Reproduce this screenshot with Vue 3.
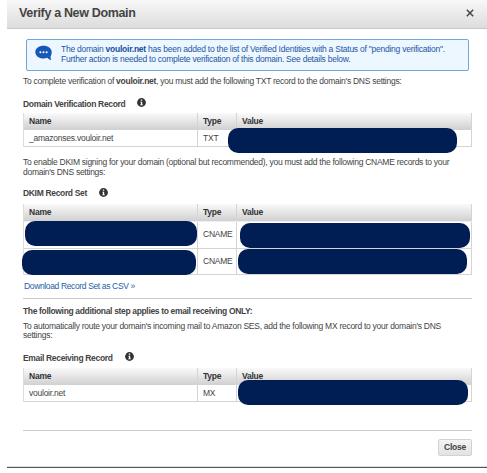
<script setup>
const domain = 'vouloir.net'
const sets = {
  txt: [{ name: '_amazonses.vouloir.net', type: 'TXT', value: 'm1' }],
  dkim: [
    { mask: 'm2', type: 'CNAME', value: 'm3' },
    { mask: 'm4', type: 'CNAME', value: 'm5' }
  ],
  mx: [{ name: 'vouloir.net', type: 'MX', value: 'm6' }]
}
const blocks = [
  { key: 'txt', label: 'Domain Verification Record' },
  { key: 'dkim', label: 'DKIM Record Set' },
  { key: 'mx', label: 'Email Receiving Record' }
]
</script>

<template>
  <div class="dialog">
    <header class="head">
      <h1>Verify a New Domain</h1>
      <svg class="x" viewBox="0 0 8 8"><path d="M.8.8 7.200 7.200M7.200.8.8 7.200" stroke="#444" stroke-width="1.500" /></svg>
    </header>
    <main class="body">
      <div class="alert">
        <svg class="bubble" viewBox="0 0 17 16">
          <path d="M8.5.7C4 .7.3 3.200.3 7s3.700 6.500 8.200 6.500c1.400 0 2.700-.2 3.800-.7 1 1.200 2.400 2 4 2.200-.5-.9-.8-2.200-.7-3.500.7-1.200 1.100-2.800 1.100-4.500C16.700 3.200 13 .7 8.500.7z" fill="#1659b5" />
          <circle cx="5.400" cy="7.300" r="1" fill="#fff" /><circle cx="8.500" cy="7.300" r="1" fill="#fff" /><circle cx="11.600" cy="7.300" r="1" fill="#fff" />
        </svg>
        <div class="alert-text">
          <div class="a1">The domain <b>{{ domain }}</b> has been added to the list of Verified Identities with a Status of "pending verification".</div>
          <div class="a2">Further action is needed to complete verification of this domain. See details below.</div>
        </div>
      </div>
      <section v-for="b in blocks" :key="b.key" :class="b.key">
        <p v-if="b.key === 'txt'">To complete verification of <b>{{ domain }}</b>, you must add the following TXT record to the domain's DNS settings:</p>
        <p v-else-if="b.key === 'dkim'">To enable DKIM signing for your domain (optional but recommended), you must add the following CNAME records to your<br>domain's DNS settings:</p>
        <template v-else>
          <div class="only">The following additional step applies to email receiving ONLY:</div>
          <p>To automatically route your domain's incoming mail to Amazon SES, add the following MX record to your domain's DNS<br>settings:</p>
        </template>
        <h2>
          <span>{{ b.label }}</span>
          <svg viewBox="0 0 9 9"><circle cx="4.500" cy="4.500" r="4.400" fill="#333" /><path d="M3.300 3.700h1.900v2.800h.7v.8H3.200v-.8h.7v-2h-.6zM3.800 1.400h1.400v1.400H3.800z" fill="#fff" /></svg>
        </h2>
        <div class="table">
          <div class="row th"><div>Name</div><div>Type</div><div>Value</div></div>
          <div v-for="r in sets[b.key]" :key="r.value" class="row td">
            <div><i v-if="r.mask" class="mask" :class="r.mask"></i><span v-else>{{ r.name }}</span></div>
            <div>{{ r.type }}</div>
            <div><i class="mask" :class="r.value"></i></div>
          </div>
        </div>
        <a v-if="b.key === 'dkim'">Download Record Set as CSV »</a>
      </section>
      <footer><button>Close</button></footer>
    </main>
  </div>
</template>

<style>
body { margin: 0; background: #fff; overflow: hidden; }
</style>
<style scoped>
* { box-sizing: border-box; }
.dialog { margin-left: 7px; width: 480px; height: 468px; border-bottom: 1px solid #555; font: 8.500px/9.500px "Liberation Sans", Arial, sans-serif; letter-spacing: -.24px; color: #444; white-space: nowrap; box-shadow: inset 0 -1px #ddd; }
.head { height: 29px; display: flex; align-items: center; justify-content: space-between; padding: 0 13px 2px 12px; background: linear-gradient(#f8f8f8, #dcdcdc); border-bottom: 1px solid #c8c8c8; }
h1 { margin: 0; font-size: 12.500px; letter-spacing: -.34px; line-height: 14px; color: #444; }
.x { width: 8px; height: 8px; }
.body { padding: 10px 16px 0; }
.alert { width: 443px; height: 32px; margin-left: 3px; border: 1px solid #6da7db; border-radius: 2px; background: #edf7ff; display: flex; color: #2456a5; padding: 5px 0 0 8px; }
.bubble { flex: none; width: 17px; height: 16px; margin-right: 9px; }
.alert-text b { color: #174f9f; }
section { width: 449px; }
p { margin: 0; letter-spacing: -.27px; }
h2 { margin: 0; font-size: 8.500px; letter-spacing: -.33px; line-height: 10px; height: 10px; display: flex; align-items: center; }
h2 svg { width: 9px; height: 9px; margin-left: 12px; margin-top: -2px; }
.txt { padding-top: 6px; height: 87px; }
.txt h2 { margin: 12px 0 4.500px; }
.dkim { height: 141px; border-bottom: 1px solid #ccc; }
.dkim h2 { margin: 11px 0 6px; }
.dkim a { display: block; margin: 7px 0 0 1px; letter-spacing: -.36px; color: #2461a8; }
.mx { height: 132px; border-bottom: 1px solid #ccc; padding-top: 8px; }
.only { font-weight: bold; letter-spacing: -.34px; margin-bottom: 5px; }
.mx h2 { margin: 12px 0 5.500px; }
.row { display: grid; grid-template-columns: 174px 39px 235px; }
.table { border-left: 1px solid #ddd; }
.row > div { position: relative; padding-left: 5px; border-right: 1px solid #d4d4d4; display: flex; align-items: center; }
.th { height: 17px; font-weight: bold; color: #333; background: linear-gradient(#fafafa, #d0d0d2); }
.td { height: 17px; border-bottom: 1px solid #d4d4d4; }
.txt .td > div, .mx .td > div { padding-top: 1px; }
.dkim .td { height: 26px; }
.dkim .th { height: 18px; border-bottom: 1px solid #eee; }
.dkim .th + .td { height: 27px; }
.mask { position: absolute; z-index: 1; height: 25px; border-radius: 10px; background: #001d54; }
.m1 { left: -9px; top: -2px; width: 229px; }
.m2 { left: 1px; top: -1px; width: 172px; }
.m3 { left: 3px; top: 1px; width: 230px; }
.m4 { left: -2px; top: 1px; width: 174px; }
.m5 { left: 1px; top: 0; width: 229px; height: 24.500px; }
.m6 { left: 1px; top: -5px; width: 230px; }
footer { display: flex; justify-content: flex-end; padding-top: 8px; width: 449px; }
button { width: 34px; height: 17px; padding: 0; border: 1px solid #d2d2d2; border-radius: 2px; background: linear-gradient(#f4f4f4, #e2e2e2); font: bold 8.500px/15px "Liberation Sans", Arial, sans-serif; letter-spacing: -.24px; color: #444; }
</style>
